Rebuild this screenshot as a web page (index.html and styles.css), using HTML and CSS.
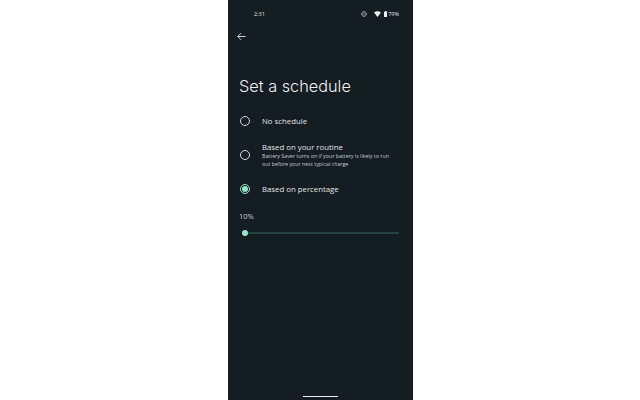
FILE: index.html
```html
<!DOCTYPE html>
<html lang="en">
<head>
  <meta charset="UTF-8">
  <title>Set a schedule</title>
  <link rel="stylesheet" href="styles.css">
</head>
<body>
  <div class="phone">
    <div class="status-bar">
      <span class="clock">2:31</span>
      <div class="status-icons">
        <svg class="icon-vibrate" viewBox="0 0 8 7"><path d="M.5 2v3M2.500 .5h3v6h-3zM7.500 2v3" fill="none" stroke="#d0d4d4" stroke-width=".9"/></svg>
        <svg class="icon-wifi" viewBox="0 0 8 7"><path d="M0 1.800Q4-1 8 1.800L4 7z" fill="#f2f4f4"/></svg>
        <svg class="icon-battery" viewBox="0 0 4 7"><path d="M1.200 0h1.600v.8H4V7H0V.8h1.200z" fill="#f2f4f4"/></svg>
        <span class="battery-level">79%</span>
      </div>
    </div>

    <svg class="back" viewBox="0 0 10 10"><path d="M9.500 5H1M4.500 1.300L.9 5l3.600 3.700" fill="none" stroke="#e8eaea" stroke-width="1"/></svg>

    <h1>Set a schedule</h1>

    <div class="options">
      <div class="option">
        <span class="radio"></span>
        <div class="label">No schedule</div>
      </div>
      <div class="option">
        <span class="radio"></span>
        <div>
          <div class="label">Based on your routine</div>
          <div class="hint">Battery Saver turns on if your battery is likely to run<br>out before your next typical charge</div>
        </div>
      </div>
      <div class="option">
        <span class="radio checked"></span>
        <div class="label">Based on percentage</div>
      </div>
    </div>

    <div class="percent">10%</div>
    <div class="slider">
      <span class="thumb"></span>
      <span class="track"></span>
    </div>

    <div class="spacer"></div>
    <div class="nav-handle"></div>
  </div>
</body>
</html>
```

FILE: styles.css
```css
:root {
  --page-bg: #fff;
  --phone-bg: #141d22;
  --text-color: #e0e4e3;
  --muted-color: #c6cbca;
  --accent: #98e6c8;
}

html, body {
  height: 100%;
}

body {
  margin: 0;
  background-color: var(--page-bg);
  font-family: 'Open Sans', 'Noto Sans', sans-serif;
  color: var(--text-color);
}

.phone {
  box-sizing: border-box;
  display: flex;
  flex-direction: column;
  width: 185px;
  height: 400px;
  margin-left: 228px;
  padding: 0 14px 0 11px;
  background: var(--phone-bg);
}

.status-bar {
  display: flex;
  align-items: center;
  justify-content: space-between;
  height: 8px;
  margin-top: 10px;
  padding-left: 15px;
  font-size: 5.500px;
}

.clock {
  color: var(--text-color);
}

.status-icons {
  display: flex;
  align-items: center;
}

.icon-vibrate {
  width: 6px;
  height: 6px;
  margin-right: 7px;
}

.icon-wifi {
  width: 7px;
  height: 6px;
  margin-right: 3px;
}

.icon-battery {
  width: 3.500px;
  height: 6px;
  margin-right: 1px;
}

.back {
  width: 9px;
  height: 9px;
  margin-top: 14px;
  margin-left: -2px;
}

h1 {
  margin: 34px 0 0;
  font-family: 'Inter', sans-serif;
  font-size: 16.300px;
  font-weight: 300;
  line-height: 22px;
  color: #f0f2f2;
}

.options {
  display: flex;
  flex-direction: column;
  margin-top: 7px;
}

.option {
  display: flex;
  align-items: center;
  gap: 12px;
  min-height: 34px;
}

.radio {
  box-sizing: border-box;
  flex: none;
  display: flex;
  align-items: center;
  justify-content: center;
  width: 10px;
  height: 10px;
  margin-left: 1px;
  border: 1px solid #d8dcdb;
  border-radius: 50%;
}

.radio.checked {
  border-color: var(--accent);
}

.radio.checked::after {
  content: '';
  width: 6px;
  height: 6px;
  border-radius: 50%;
  background: var(--accent);
}

.label {
  font-size: 7.800px;
  line-height: 10px;
  color: var(--text-color);
}

.hint {
  font-size: 5.300px;
  line-height: 8px;
  color: var(--muted-color);
}

.percent {
  margin-top: 5px;
  font-size: 7.500px;
  line-height: 10px;
  color: var(--muted-color);
}

.slider {
  display: flex;
  align-items: center;
  margin-top: 9px;
  margin-left: 3px;
}

.thumb {
  flex: none;
  width: 6px;
  height: 6px;
  border-radius: 50%;
  background: var(--accent);
}

.track {
  flex: 1;
  height: 1.500px;
  background: #26423f;
}

.spacer {
  flex: 1;
}

.nav-handle {
  align-self: center;
  width: 35px;
  height: 1px;
  margin-bottom: 3px;
  margin-left: 3px;
  background: #eef0f0;
}
```
